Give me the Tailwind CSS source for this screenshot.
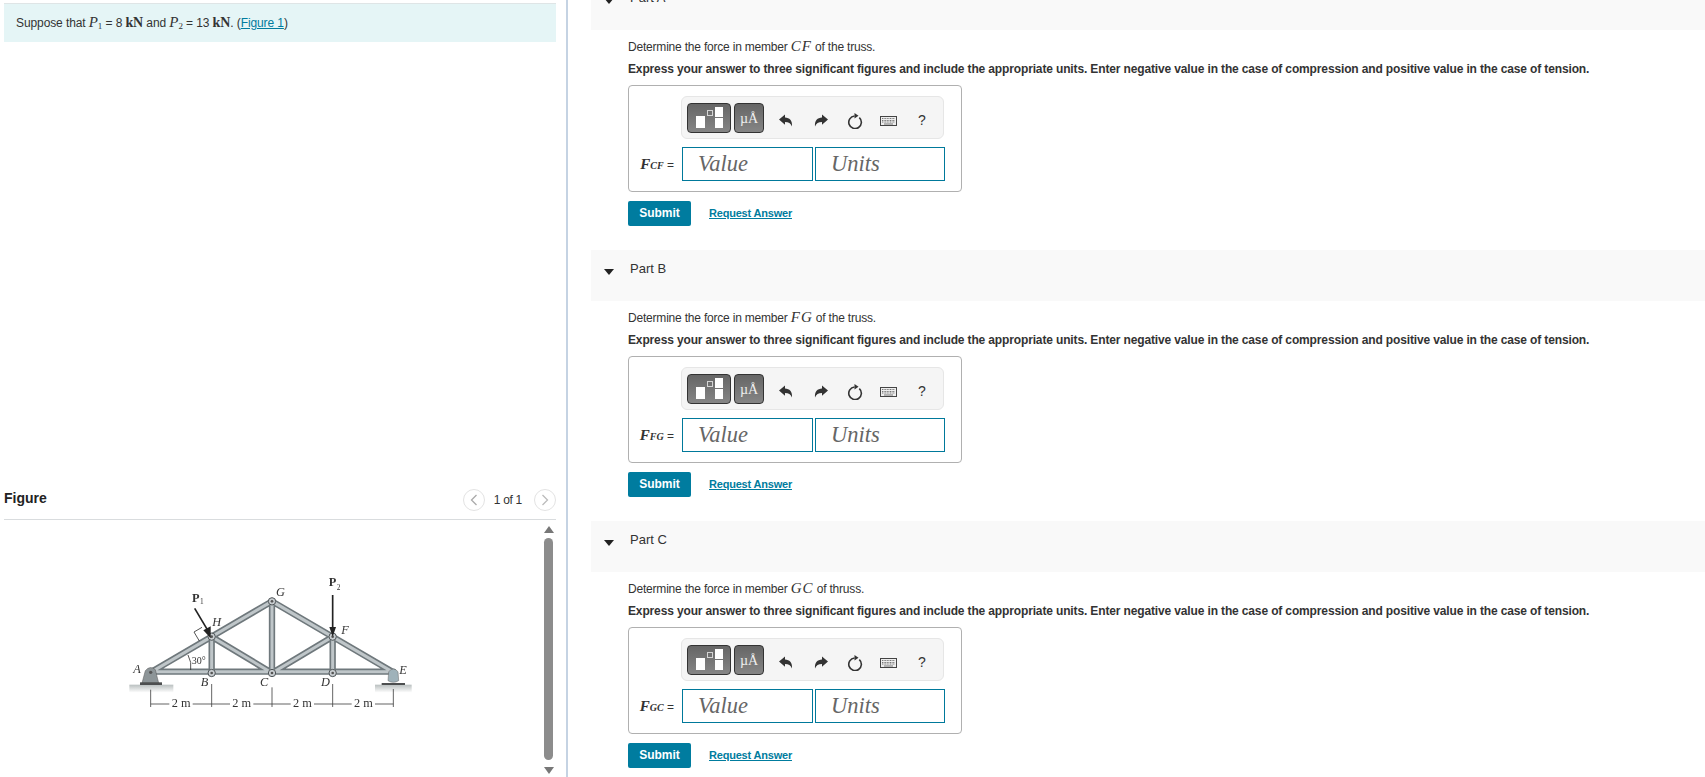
<!DOCTYPE html>
<html lang="en">
<head>
<meta charset="UTF-8">
<title>Truss problem</title>
<script src="https://cdn.jsdelivr.net/npm/@tailwindcss/browser@4"></script>
</head>
<body class="h-[777px] overflow-hidden bg-white font-['Liberation_Sans',Arial,sans-serif] text-[12px] text-[#333]">
<!-- shared toolbar icons -->
<svg class="hidden">
  <symbol id="undo" viewBox="0 0 16 16"><path d="M1 6.5 7 1.5V4.6C11.5 4.8 14.5 7.5 14 13.5 12.8 10.4 10.6 9 7 9V11.8Z" fill="#333"/></symbol>
  <symbol id="redo" viewBox="0 0 16 16"><path d="M15 6.5 9 1.5V4.6C4.5 4.8 1.5 7.5 2 13.5 3.2 10.4 5.4 9 9 9V11.8Z" fill="#333"/></symbol>
  <symbol id="reset" viewBox="0 0 16 16"><path d="M12.3 4.6A6.3 6.3 0 1 1 7.5 3" fill="none" stroke="#333" stroke-width="1.6"/><path d="M7.5 0 11.5 2.8 7.5 5.6Z" fill="#333"/></symbol>
  <symbol id="keys" viewBox="0 0 17 10"><rect x="0.5" y="0.5" width="16" height="9" fill="#eee" stroke="#444"/><path d="M2 2.5H15M2 4.5H15M2 6H15" stroke="#777" stroke-dasharray="1 0.6"/><path d="M4 8H13" stroke="#777"/></symbol>
</svg>

<div class="flex h-[777px]">
  <!-- left column -->
  <div class="w-[566px] shrink-0 pl-1 pt-[3px] pr-[10px]">
    <div class="h-[39px] flex items-center bg-[#e5f5f6] border-t border-[#dfe5e6] pl-3 pb-[2px] text-[12px] tracking-[-0.1px]">
      <span>Suppose that <i class="font-['Liberation_Serif',serif] text-[15px]">P</i><sub class="font-['Liberation_Serif',serif] text-[9px]">1</sub> = 8 <b class="font-['Liberation_Serif',serif] text-[14px]">kN</b> and <i class="font-['Liberation_Serif',serif] text-[15px]">P</i><sub class="font-['Liberation_Serif',serif] text-[9px]">2</sub> = 13 <b class="font-['Liberation_Serif',serif] text-[14px]">kN</b>. (<a class="text-[#007c9e] underline">Figure 1</a>)</span>
    </div>
    <div class="mt-[442px] flex h-[36px] items-start justify-between border-b border-[#d9dcde] pt-[5px]">
      <span class="text-[14px] font-bold text-[#222] -mt-[1px]">Figure</span>
      <div class="flex items-center">
        <span class="flex h-[22px] w-[22px] items-center justify-center rounded-full border border-[#e3e3e3]">
          <svg width="8" height="12" viewBox="0 0 8 12"><path d="M6.5 1 1.5 6 6.5 11" fill="none" stroke="#aaa" stroke-width="1.3"/></svg>
        </span>
        <span class="ml-[9px] mr-[12px] text-[12px] tracking-[-0.3px]">1 of 1</span>
        <span class="flex h-[22px] w-[22px] items-center justify-center rounded-full border border-[#e3e3e3]">
          <svg width="8" height="12" viewBox="0 0 8 12"><path d="M1.5 1 6.5 6 1.5 11" fill="none" stroke="#bbb" stroke-width="1.3"/></svg>
        </span>
      </div>
    </div>
    <div class="flex h-[256px] justify-between">
      <!-- truss figure -->
      <svg class="mt-[49px] ml-[116px] blur-[0.4px]" width="310" height="160" viewBox="0 0 930 480">
        <defs>
          <linearGradient id="ground" x1="0" y1="0" x2="0" y2="1"><stop offset="0" stop-color="#b9bfbf"/><stop offset="1" stop-color="#ffffff"/></linearGradient>
        </defs>
        <rect x="28" y="347" width="132" height="24" fill="url(#ground)"/>
        <rect x="765" y="347" width="110" height="24" fill="url(#ground)"/>
        <g stroke-linecap="round" fill="none">
          <g stroke="#6f787c" stroke-width="19">
            <path d="M100 308H820M92 310 456 97 820 310M275 203V312M456 97V312M638 203V312M275 203 456 312 638 203"/>
          </g>
          <g stroke="#bfc6c9" stroke-width="9">
            <path d="M100 308H820M92 310 456 97 820 310M275 203V312M456 97V312M638 203V312M275 203 456 312 638 203"/>
          </g>
        </g>
        <path d="M66 342 76 305Q90 288 106 302L116 342Z" fill="#8d9598" stroke="#555" stroke-width="1.5"/>
        <circle cx="92" cy="310" r="5" fill="#555"/>
        <rect x="60" y="340" width="66" height="8" fill="#4d4f50"/>
        <path d="M804 335 806 308Q820 292 834 308L836 335Q820 345 804 335Z" fill="#9fb2ba" stroke="#666" stroke-width="1.5"/>
        <rect x="785" y="342" width="70" height="6" fill="#4d4f50"/>
        <g fill="#c8cdd0" stroke="#4f5558" stroke-width="3">
          <circle cx="275" cy="203" r="11"/><circle cx="456" cy="97" r="11"/><circle cx="638" cy="203" r="11"/>
          <circle cx="275" cy="312" r="11"/><circle cx="456" cy="312" r="11"/><circle cx="638" cy="312" r="11"/>
        </g>
        <g fill="#555">
          <circle cx="275" cy="203" r="4"/><circle cx="456" cy="97" r="4"/><circle cx="638" cy="203" r="4"/>
          <circle cx="275" cy="312" r="4"/><circle cx="456" cy="312" r="4"/><circle cx="638" cy="312" r="4"/>
        </g>
        <!-- loads -->
        <path d="M224 118 262 182" stroke="#222" stroke-width="5"/><path d="M250 184 272 172 272 208Z" fill="#222"/>
        <path d="M638 78V178" stroke="#222" stroke-width="5"/><path d="M628 174H648L638 203Z" fill="#222"/>
        <path d="M222 189 246 175M222 189 238 216M204 258Q216 280 212 303" fill="none" stroke="#333" stroke-width="2.5"/>
        <!-- dimensions -->
        <path d="M92 362V414M275 345V414M456 355V414M638 345V414M820 360V414M92 405H820" stroke="#444" stroke-width="2.5" fill="none"/>
        <g fill="#fff"><rect x="148" y="392" width="70" height="26"/><rect x="330" y="392" width="70" height="26"/><rect x="512" y="392" width="70" height="26"/><rect x="695" y="392" width="70" height="26"/></g>
        <g font-family="Liberation Serif, serif" font-size="37" fill="#333">
          <text x="155" y="414">2 m</text><text x="337" y="414">2 m</text><text x="519" y="414">2 m</text><text x="702" y="414">2 m</text>
          <text x="215" y="284" font-size="30">30°</text>
          <g font-style="italic">
            <text x="40" y="312">A</text><text x="242" y="352">B</text><text x="420" y="350">C</text><text x="603" y="350">D</text><text x="838" y="314">E</text>
            <text x="277" y="172">H</text><text x="468" y="80">G</text><text x="664" y="195">F</text>
          </g>
          <text x="216" y="98" font-weight="bold">P</text><text x="240" y="104" font-size="22">1</text>
          <text x="626" y="52" font-weight="bold">P</text><text x="650" y="62" font-size="22">2</text>
        </g>
      </svg>
      <!-- scrollbar -->
      <div class="flex w-[13px] flex-col items-center pt-[6px] mr-[1px]">
        <svg width="10" height="7" viewBox="0 0 10 7"><path d="M5 0 10 7H0Z" fill="#777"/></svg>
        <div class="mt-[5px] h-[222px] w-[9px] rounded-full bg-[#8c8c8c]"></div>
        <svg class="mt-[7px]" width="10" height="7" viewBox="0 0 10 7"><path d="M5 7 10 0H0Z" fill="#777"/></svg>
      </div>
    </div>
  </div>
  <div class="w-[2px] shrink-0 bg-[#c5d3e3]"></div>

  <!-- right column -->
  <div class="-mt-[21px] min-w-0 flex-1 pl-[23px]">

    <section class="h-[271px]">
      <div class="flex h-[51px] items-center bg-[#f9f9f9] pl-[13px] text-[13px]">
        <svg class="mb-[8px]" width="10" height="6" viewBox="0 0 10 6"><path d="M0 0H10L5 6Z" fill="#222"/></svg>
        <span class="ml-[16px] mb-[13px]">Part A</span>
      </div>
      <div class="pl-[37px]">
        <p class="mt-[9px] h-[14px] leading-[14px] tracking-[-0.2px] whitespace-nowrap">Determine the force in member <i class="font-['Liberation_Serif',serif] text-[15px] tracking-[1px]">CF</i> of the truss.</p>
        <p class="mt-[9px] h-[14px] leading-[14px] font-bold tracking-[-0.14px] whitespace-nowrap">Express your answer to three significant figures and include the appropriate units. Enter negative value in the case of compression and positive value in the case of tension.</p>
        <div class="mt-[9px] h-[107px] w-[334px] rounded-[4px] border border-[#b0b0b0]">
          <div class="mt-[10px] ml-[52px] flex h-[43px] w-[263px] items-center rounded-[6px] border border-[#e6e6e6] bg-[#f5f5f5] pl-[5px]">
            <span class="flex h-[30px] w-[44px] items-center justify-center gap-[2px] rounded-[4px] border border-[#333] bg-linear-to-b from-[#666] to-[#858585]">
              <span class="mt-[8px] h-[12px] w-[9px] bg-white"></span>
              <span class="mb-[10px] h-[6px] w-[6px] border border-white/70"></span>
              <span class="flex w-[8px] flex-col gap-[1px]"><span class="h-[10px] bg-white"></span><span class="h-[10px] bg-white"></span></span>
            </span>
            <span class="ml-[3px] flex h-[30px] w-[30px] items-center justify-center rounded-[4px] border border-[#333] bg-linear-to-b from-[#666] to-[#858585] pt-[2px] font-['Liberation_Serif',serif] text-[14px] text-[#eee]">µÅ</span>
            <svg class="ml-[14px] mt-[6px]" width="16" height="16"><use href="#undo"/></svg>
            <svg class="ml-[19px] mt-[6px]" width="16" height="16"><use href="#redo"/></svg>
            <svg class="ml-[18px] mt-[6px]" width="16" height="16"><use href="#reset"/></svg>
            <svg class="ml-[17px] mt-[6px]" width="17" height="10"><use href="#keys"/></svg>
            <span class="ml-[21px] mt-[6px] text-[14px]">?</span>
          </div>
          <div class="mt-[8px] flex h-[34px] items-center">
            <span class="w-[53px] shrink-0 pr-[8px] text-right whitespace-nowrap"><i class="font-['Liberation_Serif',serif] text-[15px] font-bold">F<span class="text-[10px]">CF</span></i> =</span>
            <div class="flex h-[34px] w-[131px] items-center border border-[#00799b] pl-[15px] pb-[1px] font-['Liberation_Serif',serif] text-[22.5px] text-[#666] italic">Value</div>
            <div class="ml-[2px] flex h-[34px] w-[130px] items-center border border-[#00799b] pl-[15px] pb-[1px] font-['Liberation_Serif',serif] text-[22.5px] text-[#666] italic">Units</div>
          </div>
        </div>
        <div class="mt-[9px] flex items-center">
          <span class="flex h-[25px] w-[63px] items-center justify-center rounded-[2px] bg-[#007c9f] pb-[2px] font-bold text-white">Submit</span>
          <a class="ml-[18px] font-bold text-[11px] tracking-[-0.2px] text-[#007c9e] underline">Request Answer</a>
        </div>
      </div>
    </section>

    <section class="h-[271px]">
      <div class="flex h-[51px] items-center bg-[#f9f9f9] pl-[13px] text-[13px]">
        <svg class="mb-[8px]" width="10" height="6" viewBox="0 0 10 6"><path d="M0 0H10L5 6Z" fill="#222"/></svg>
        <span class="ml-[16px] mb-[13px]">Part B</span>
      </div>
      <div class="pl-[37px]">
        <p class="mt-[9px] h-[14px] leading-[14px] tracking-[-0.2px] whitespace-nowrap">Determine the force in member <i class="font-['Liberation_Serif',serif] text-[15px] tracking-[1px]">FG</i> of the truss.</p>
        <p class="mt-[9px] h-[14px] leading-[14px] font-bold tracking-[-0.14px] whitespace-nowrap">Express your answer to three significant figures and include the appropriate units. Enter negative value in the case of compression and positive value in the case of tension.</p>
        <div class="mt-[9px] h-[107px] w-[334px] rounded-[4px] border border-[#b0b0b0]">
          <div class="mt-[10px] ml-[52px] flex h-[43px] w-[263px] items-center rounded-[6px] border border-[#e6e6e6] bg-[#f5f5f5] pl-[5px]">
            <span class="flex h-[30px] w-[44px] items-center justify-center gap-[2px] rounded-[4px] border border-[#333] bg-linear-to-b from-[#666] to-[#858585]">
              <span class="mt-[8px] h-[12px] w-[9px] bg-white"></span>
              <span class="mb-[10px] h-[6px] w-[6px] border border-white/70"></span>
              <span class="flex w-[8px] flex-col gap-[1px]"><span class="h-[10px] bg-white"></span><span class="h-[10px] bg-white"></span></span>
            </span>
            <span class="ml-[3px] flex h-[30px] w-[30px] items-center justify-center rounded-[4px] border border-[#333] bg-linear-to-b from-[#666] to-[#858585] pt-[2px] font-['Liberation_Serif',serif] text-[14px] text-[#eee]">µÅ</span>
            <svg class="ml-[14px] mt-[6px]" width="16" height="16"><use href="#undo"/></svg>
            <svg class="ml-[19px] mt-[6px]" width="16" height="16"><use href="#redo"/></svg>
            <svg class="ml-[18px] mt-[6px]" width="16" height="16"><use href="#reset"/></svg>
            <svg class="ml-[17px] mt-[6px]" width="17" height="10"><use href="#keys"/></svg>
            <span class="ml-[21px] mt-[6px] text-[14px]">?</span>
          </div>
          <div class="mt-[8px] flex h-[34px] items-center">
            <span class="w-[53px] shrink-0 pr-[8px] text-right whitespace-nowrap"><i class="font-['Liberation_Serif',serif] text-[15px] font-bold">F<span class="text-[10px]">FG</span></i> =</span>
            <div class="flex h-[34px] w-[131px] items-center border border-[#00799b] pl-[15px] pb-[1px] font-['Liberation_Serif',serif] text-[22.5px] text-[#666] italic">Value</div>
            <div class="ml-[2px] flex h-[34px] w-[130px] items-center border border-[#00799b] pl-[15px] pb-[1px] font-['Liberation_Serif',serif] text-[22.5px] text-[#666] italic">Units</div>
          </div>
        </div>
        <div class="mt-[9px] flex items-center">
          <span class="flex h-[25px] w-[63px] items-center justify-center rounded-[2px] bg-[#007c9f] pb-[2px] font-bold text-white">Submit</span>
          <a class="ml-[18px] font-bold text-[11px] tracking-[-0.2px] text-[#007c9e] underline">Request Answer</a>
        </div>
      </div>
    </section>

    <section class="h-[271px]">
      <div class="flex h-[51px] items-center bg-[#f9f9f9] pl-[13px] text-[13px]">
        <svg class="mb-[8px]" width="10" height="6" viewBox="0 0 10 6"><path d="M0 0H10L5 6Z" fill="#222"/></svg>
        <span class="ml-[16px] mb-[13px]">Part C</span>
      </div>
      <div class="pl-[37px]">
        <p class="mt-[9px] h-[14px] leading-[14px] tracking-[-0.2px] whitespace-nowrap">Determine the force in member <i class="font-['Liberation_Serif',serif] text-[15px] tracking-[1px]">GC</i> of thruss.</p>
        <p class="mt-[9px] h-[14px] leading-[14px] font-bold tracking-[-0.14px] whitespace-nowrap">Express your answer to three significant figures and include the appropriate units. Enter negative value in the case of compression and positive value in the case of tension.</p>
        <div class="mt-[9px] h-[107px] w-[334px] rounded-[4px] border border-[#b0b0b0]">
          <div class="mt-[10px] ml-[52px] flex h-[43px] w-[263px] items-center rounded-[6px] border border-[#e6e6e6] bg-[#f5f5f5] pl-[5px]">
            <span class="flex h-[30px] w-[44px] items-center justify-center gap-[2px] rounded-[4px] border border-[#333] bg-linear-to-b from-[#666] to-[#858585]">
              <span class="mt-[8px] h-[12px] w-[9px] bg-white"></span>
              <span class="mb-[10px] h-[6px] w-[6px] border border-white/70"></span>
              <span class="flex w-[8px] flex-col gap-[1px]"><span class="h-[10px] bg-white"></span><span class="h-[10px] bg-white"></span></span>
            </span>
            <span class="ml-[3px] flex h-[30px] w-[30px] items-center justify-center rounded-[4px] border border-[#333] bg-linear-to-b from-[#666] to-[#858585] pt-[2px] font-['Liberation_Serif',serif] text-[14px] text-[#eee]">µÅ</span>
            <svg class="ml-[14px] mt-[6px]" width="16" height="16"><use href="#undo"/></svg>
            <svg class="ml-[19px] mt-[6px]" width="16" height="16"><use href="#redo"/></svg>
            <svg class="ml-[18px] mt-[6px]" width="16" height="16"><use href="#reset"/></svg>
            <svg class="ml-[17px] mt-[6px]" width="17" height="10"><use href="#keys"/></svg>
            <span class="ml-[21px] mt-[6px] text-[14px]">?</span>
          </div>
          <div class="mt-[8px] flex h-[34px] items-center">
            <span class="w-[53px] shrink-0 pr-[8px] text-right whitespace-nowrap"><i class="font-['Liberation_Serif',serif] text-[15px] font-bold">F<span class="text-[10px]">GC</span></i> =</span>
            <div class="flex h-[34px] w-[131px] items-center border border-[#00799b] pl-[15px] pb-[1px] font-['Liberation_Serif',serif] text-[22.5px] text-[#666] italic">Value</div>
            <div class="ml-[2px] flex h-[34px] w-[130px] items-center border border-[#00799b] pl-[15px] pb-[1px] font-['Liberation_Serif',serif] text-[22.5px] text-[#666] italic">Units</div>
          </div>
        </div>
        <div class="mt-[9px] flex items-center">
          <span class="flex h-[25px] w-[63px] items-center justify-center rounded-[2px] bg-[#007c9f] pb-[2px] font-bold text-white">Submit</span>
          <a class="ml-[18px] font-bold text-[11px] tracking-[-0.2px] text-[#007c9e] underline">Request Answer</a>
        </div>
      </div>
    </section>
  </div>
</div>
</body>
</html>
